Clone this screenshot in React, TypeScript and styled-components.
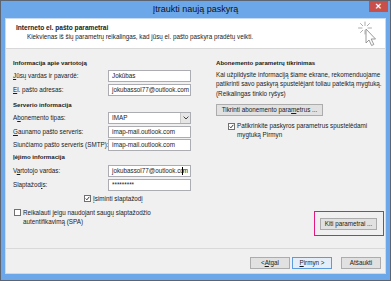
import React from 'react'
import styled, { createGlobalStyle } from 'styled-components'

const GlobalStyle = createGlobalStyle`
  html, body {
    margin: 0;
    padding: 0;
    background: #ffffff;
  }
  * {
    box-sizing: border-box;
  }
`

const FONT = `"Liberation Sans", Arial, sans-serif`

const Window = styled.div`
  width: 391px;
  height: 281px;
  border: 1px solid #5b6470;
  background: #6ca7ea;
  display: flex;
  flex-direction: column;
  font-family: ${FONT};
  color: #1b1b1b;
  font-size: 6.3px;
`

const TitleBar = styled.div`
  height: 17px;
  display: grid;
  grid-template-columns: 1fr auto 1fr;
  align-items: start;
`

const Title = styled.div`
  grid-column: 2;
  font-size: 9px;
  line-height: 17px;
  color: #111;
`

const CloseButton = styled.div`
  grid-column: 3;
  justify-self: end;
  margin-right: 2px;
  width: 19px;
  height: 11px;
  background: #c9504a;
  color: #fff;
  font-size: 8px;
  font-weight: bold;
  line-height: 11px;
  text-align: center;
`

const Client = styled.div`
  flex: 1;
  margin: 0 4px 6px 4px;
  border: 1px solid #c6dbf3;
  background: #f0f0f0;
  display: flex;
  flex-direction: column;
`

const Header = styled.div`
  height: 30px;
  background: #ffffff;
  border-bottom: 1px solid #d8d8d8;
  display: flex;
  justify-content: space-between;
  padding: 2px 7px 0 10px;
`

const HeaderText = styled.div`
  padding-top: 2px;
`

const HeaderTitle = styled.div`
  font-weight: bold;
  font-size: 6.6px;
  line-height: 9px;
`

const HeaderSub = styled.div`
  margin-left: 11px;
  line-height: 9px;
`

const Body = styled.div`
  flex: 1;
  display: grid;
  grid-template-columns: 203px 1fr;
  padding: 0 0 0 7px;
`

const Column = styled.div`
  display: flex;
  flex-direction: column;
`

const SectionTitle = styled.div<{ $top: number }>`
  margin-top: ${({ $top }) => $top}px;
  font-weight: bold;
  font-size: 6.1px;
  line-height: 9px;
  height: 9px;
  white-space: nowrap;
`

const FormGrid = styled.div<{ $top: number; $gap: number }>`
  margin-top: ${({ $top }) => $top}px;
  display: grid;
  grid-template-columns: 95px 83px;
  row-gap: ${({ $gap }) => $gap}px;
  align-items: center;
`

const Label = styled.div`
  line-height: 12px;
  white-space: nowrap;
`

const Key = styled.span`
  text-decoration: underline;
`

const Field = styled.div`
  height: 12px;
  background: #ffffff;
  border: 1px solid #abadb3;
  padding-left: 3px;
  line-height: 10px;
  white-space: nowrap;
  overflow: hidden;
  display: flex;
  align-items: center;
`

const Caret = styled.span`
  display: inline-block;
  width: 1px;
  height: 8px;
  background: #000;
  margin-left: -2px;
`

const SelectField = styled(Field)`
  padding-right: 0;
  justify-content: space-between;
`

const SelectArrow = styled.div`
  width: 10px;
  height: 10px;
  background: #e6e6e6;
  border-left: 1px solid #c8c8c8;
  display: flex;
  align-items: center;
  justify-content: center;
`

const CheckRow = styled.div<{ $top: number; $indent: number }>`
  margin-top: ${({ $top }) => $top}px;
  padding-left: ${({ $indent }) => $indent}px;
  display: flex;
  align-items: flex-start;
  gap: 2px;
  line-height: 9px;
  white-space: nowrap;
`

const Box = styled.div<{ $offset: number }>`
  flex: none;
  width: 7px;
  height: 7px;
  margin-top: ${({ $offset }) => $offset}px;
  background: #ffffff;
  border: 1px solid #707070;
  display: flex;
  align-items: center;
  justify-content: center;
`

const RightColumn = styled(Column)`
  padding-right: 1px;
`

const Paragraph = styled.div`
  margin-top: 3px;
  line-height: 9.3px;
  white-space: nowrap;
`

const Button = styled.div<{ $width: number; $primary?: boolean }>`
  width: ${({ $width }) => $width}px;
  height: 12px;
  background: ${({ $primary }) => ($primary ? '#e5eef8' : '#e1e1e1')};
  border: 1px solid ${({ $primary }) => ($primary ? '#5d9bdc' : '#acacac')};
  display: flex;
  align-items: center;
  justify-content: center;
  line-height: 10px;
  white-space: nowrap;
`

const CheckButtonWrap = styled.div`
  margin-top: 6px;
`

const Highlight = styled.div`
  margin-top: auto;
  margin-bottom: 12px;
  align-self: flex-end;
  width: 70px;
  height: 25px;
  border: 1.5px solid #e2197e;
  padding: 6px 0 0 5px;
`

const Footer = styled.div`
  border-top: 1px solid #d9d9d9;
  height: 25px;
  display: flex;
  justify-content: flex-end;
  align-items: flex-start;
  padding: 8px 4px 0 0;
  gap: 2px;
`

const FooterGap = styled.div`
  width: 5px;
`

const Check = () => (
  <svg width="7" height="7" viewBox="0 0 7 7">
    <path d="M1 3.6 L2.7 5.3 L6 1.2" fill="none" stroke="#111" strokeWidth="1.2" />
  </svg>
)

const WizardIcon = () => (
  <svg width="20" height="28" viewBox="0 0 20 28">
    <g stroke="#a3a3a3" strokeWidth="0.9" strokeLinecap="round">
      <line x1="7" y1="1" x2="7" y2="4.5" />
      <line x1="7" y1="9.5" x2="7" y2="13" />
      <line x1="0.5" y1="7" x2="4" y2="7" />
      <line x1="10" y1="7" x2="13.5" y2="7" />
      <line x1="2.5" y1="2.5" x2="4.8" y2="4.8" />
      <line x1="11.5" y1="2.5" x2="9.2" y2="4.8" />
      <line x1="2.5" y1="11.5" x2="4.8" y2="9.2" />
    </g>
    <path
      d="M8 8 L8 22 L11 19 L13.6 24.5 L15.8 23.5 L13.2 18 L17.5 18 Z"
      fill="#ffffff"
      stroke="#8f8f8f"
      strokeWidth="0.9"
      strokeLinejoin="round"
    />
  </svg>
)

export default function App() {
  return (
    <>
      <GlobalStyle />
      <Window>
        <TitleBar>
          <Title>Įtraukti naują paskyrą</Title>
          <CloseButton>✕</CloseButton>
        </TitleBar>
        <Client>
          <Header>
            <HeaderText>
              <HeaderTitle>Interneto el. pašto parametrai</HeaderTitle>
              <HeaderSub>Kiekvienas iš šių parametrų reikalingas, kad jūsų el. pašto paskyra pradėtų veikti.</HeaderSub>
            </HeaderText>
            <WizardIcon />
          </Header>
          <Body>
            <Column>
              <SectionTitle $top={9}>Informacija apie vartotoją</SectionTitle>
              <FormGrid $top={3} $gap={2}>
                <Label><Key>J</Key>ūsų vardas ir pavardė:</Label>
                <Field>Jokūbas</Field>
                <Label><Key>E</Key>l. pašto adresas:</Label>
                <Field>jokubassol77@outlook.com</Field>
              </FormGrid>
              <SectionTitle $top={4}>Serverio informacija</SectionTitle>
              <FormGrid $top={3} $gap={1.5}>
                <Label>A<Key>b</Key>onemento tipas:</Label>
                <SelectField>
                  IMAP
                  <SelectArrow>
                    <svg width="6" height="4" viewBox="0 0 6 4">
                      <path d="M0.6 0.6 L3 3 L5.4 0.6" fill="none" stroke="#444" strokeWidth="1" />
                    </svg>
                  </SelectArrow>
                </SelectField>
                <Label><Key>G</Key>aunamo pašto serveris:</Label>
                <Field>imap-mail.outlook.com</Field>
                <Label>Siunčiamo pašto serveris (SMTP):</Label>
                <Field>imap-mail.outlook.com</Field>
              </FormGrid>
              <SectionTitle $top={1}>Įėjimo informacija</SectionTitle>
              <FormGrid $top={4} $gap={2}>
                <Label>V<Key>a</Key>rtotojo vardas:</Label>
                <Field>jokubassol77@outlook.co<Caret />m</Field>
                <Label>Slaptažod<Key>i</Key>s:</Label>
                <Field>*********</Field>
              </FormGrid>
              <CheckRow $top={2.5} $indent={71}>
                <Box $offset={1}><Check /></Box>
                <span><Key>Į</Key>siminti slaptažodį</span>
              </CheckRow>
              <CheckRow $top={5} $indent={1}>
                <Box $offset={1}></Box>
                <span>
                  Reikalauti jeigu naudojant saugų slaptažodžio
                  <br />
                  autentifikavimą (SPA)
                </span>
              </CheckRow>
            </Column>
            <RightColumn>
              <SectionTitle $top={9}>Abonemento parametrų tikrinimas</SectionTitle>
              <Paragraph>
                Kai užpildysite informaciją šiame ekrane, rekomenduojame
                <br />
                patikrinti savo paskyrą spustelėjant toliau pateiktą mygtuką.
                <br />
                (Reikalingas tinklo ryšys)
              </Paragraph>
              <CheckButtonWrap>
                <Button $width={107}>Tikrinti abonemento para<Key>m</Key>etrus ...</Button>
              </CheckButtonWrap>
              <CheckRow $top={5.5} $indent={12}>
                <Box $offset={1.5}><Check /></Box>
                <span>
                  Patikrinkite paskyros parametrus spustelėdami
                  <br />
                  mygtuką Pirmyn
                </span>
              </CheckRow>
              <Highlight>
                <Button $width={57}>Kiti parametrai ...</Button>
              </Highlight>
            </RightColumn>
          </Body>
          <Footer>
            <Button $width={40}>&lt; <Key>A</Key>tgal</Button>
            <Button $width={40} $primary><Key>P</Key>irmyn &gt;</Button>
            <FooterGap />
            <Button $width={40}>Atšaukti</Button>
          </Footer>
        </Client>
      </Window>
    </>
  )
}
